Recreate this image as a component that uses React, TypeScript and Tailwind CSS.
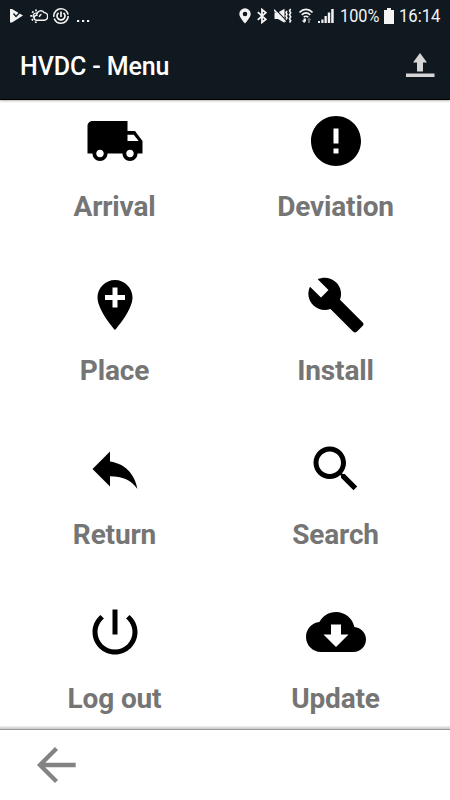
import type { ReactNode } from 'react'

type MenuItem = { label: string; path: string }

const items: MenuItem[] = [
  {
    label: 'Arrival',
    path: 'M20 8h-3V4H3c-1.1 0-2 .9-2 2v11h2c0 1.66 1.34 3 3 3s3-1.34 3-3h6c0 1.66 1.34 3 3 3s3-1.34 3-3h2v-5l-3-4zM6 18.5c-.83 0-1.5-.67-1.5-1.5s.67-1.5 1.5-1.5 1.5.67 1.5 1.5-.67 1.5-1.5 1.5zm13.5-9l1.96 2.5H17V9.5h2.5zm-1.5 9c-.83 0-1.5-.67-1.5-1.5s.67-1.5 1.5-1.5 1.5.67 1.5 1.5-.67 1.5-1.5 1.5z',
  },
  {
    label: 'Deviation',
    path: 'M12 2C6.48 2 2 6.48 2 12s4.48 10 10 10 10-4.48 10-10S17.52 2 12 2zm1 15h-2v-2h2v2zm0-4h-2V7h2v6z',
  },
  {
    label: 'Place',
    path: 'M12 2C8.14 2 5 5.14 5 9c0 5.25 7 13 7 13s7-7.75 7-13c0-3.86-3.14-7-7-7zm4 8h-3v3h-2v-3H8V8h3V5h2v3h3v2z',
  },
  {
    label: 'Install',
    path: 'M22.7 19l-9.1-9.1c.9-2.3.4-5-1.5-6.9-2-2-5-2.4-7.4-1.3L9 6 6 9 1.6 4.7C.4 7.1.9 10.1 2.9 12.1c1.9 1.9 4.6 2.4 6.9 1.5l9.1 9.1c.4.4 1 .4 1.4 0l2.3-2.3c.5-.4.5-1.1.1-1.4z',
  },
  {
    label: 'Return',
    path: 'M10 9V5l-7 7 7 7v-4.1c5 0 8.5 1.6 11 5.1-1-5-4-10-11-11z',
  },
  {
    label: 'Search',
    path: 'M15.5 14h-.79l-.28-.27C15.41 12.59 16 11.11 16 9.5 16 5.91 13.09 3 9.5 3S3 5.91 3 9.5 5.91 16 9.5 16c1.61 0 3.09-.59 4.23-1.57l.27.28v.79l5 4.99L20.49 19l-4.99-5zm-6 0C7.01 14 5 11.99 5 9.5S7.01 5 9.5 5 14 7.01 14 9.5 11.99 14 9.5 14z',
  },
  {
    label: 'Log out',
    path: 'M13 3h-2v10h2V3zm4.83 2.17l-1.42 1.42C17.99 7.86 19 9.81 19 12c0 3.87-3.13 7-7 7s-7-3.13-7-7c0-2.19 1.01-4.14 2.58-5.42L6.17 5.17C4.23 6.82 3 9.26 3 12c0 4.97 4.03 9 9 9s9-4.03 9-9c0-2.74-1.23-5.18-3.17-6.83z',
  },
  {
    label: 'Update',
    path: 'M19.35 10.04C18.67 6.59 15.64 4 12 4 9.11 4 6.6 5.64 5.35 8.04 2.34 8.36 0 10.91 0 14c0 3.31 2.69 6 6 6h13c2.76 0 5-2.24 5-5 0-2.64-2.05-4.78-4.65-4.96zM17 13l-5 5-5-5h3V9h4v4h3z',
  },
]

function Glyph({ w, h, className = '', children }: { w: number; h: number; className?: string; children: ReactNode }) {
  return (
    <svg width={w} height={h} viewBox={`0 0 ${w} ${h}`} className={`shrink-0 ${className}`} fill="none">
      {children}
    </svg>
  )
}

function StatusBar() {
  return (
    <div className="flex h-[31px] items-center justify-between pl-[9px] pr-[10px] text-[#f4f4f4]">
      <div className="flex items-center">
        {/* Play check */}
        <Glyph w={14} h={16}>
          <path d="M1 1h2l11 6.5-11 7H1z" fill="currentColor" />
          <path d="M4.5 5.5L7 8.5l5.5-6" stroke="#101820" strokeWidth="1.3" />
        </Glyph>
        {/* Weather */}
        <Glyph w={18} h={16} className="ml-[7px]">
          <path d="M6.5 12.3a2.5 2.5 0 0 1 .3-5 4 4 0 0 1 7.2-2.8 3.9 3.9 0 0 1-.4 7.8zM9.3 9c.2-1.5 1-2.5 2.2-2.8" stroke="currentColor" strokeWidth="1.5" />
          <path d="M3.6 9.5a2.8 2.8 0 0 1 3-4.3" stroke="currentColor" strokeWidth="1.4" />
          <path d="M6 1.5v1.8M2.2 3.5l1.3 1.2M.2 7.8h1.8M1.8 12.3l1.3-1.2M5.8 15v-1.5" stroke="currentColor" strokeWidth="1.8" />
        </Glyph>
        {/* Power ring */}
        <Glyph w={16} h={16} className="ml-[5px]">
          <circle cx="8" cy="8" r="7.2" stroke="currentColor" strokeWidth="1.6" strokeDasharray="20 1.5 22 1.7" />
          <path d="M5.5 4.8a4 4 0 1 0 5 0M8 3.5V9" stroke="currentColor" strokeWidth="1.7" />
        </Glyph>
        <Glyph w={14} h={16} className="ml-[7px]">
          <path d="M1 13h2.2M6 13h2.2M11 13h2.2" stroke="currentColor" strokeWidth="2" />
        </Glyph>
      </div>

      <div className="flex items-center">
        {/* Location */}
        <Glyph w={12} h={16}>
          <path fillRule="evenodd" d="M6 .3A5.7 5.7 0 0 0 .3 6c0 3.5 5.7 9.5 5.7 9.5s5.7-6 5.7-9.5A5.7 5.7 0 0 0 6 .3zm0 3.4a2.3 2.3 0 1 1 0 4.6 2.3 2.3 0 0 1 0-4.6z" fill="currentColor" />
        </Glyph>
        {/* Bluetooth */}
        <Glyph w={10} h={16} className="ml-[6px]">
          <path d="M.8 4.2l8 7.1L5 14.4V1.6l3.8 3.1-8 7.1" stroke="currentColor" strokeWidth="1.8" />
        </Glyph>
        {/* Sound off, vibrate */}
        <Glyph w={18} h={16} className="ml-[7px]">
          <path d="M.5 4.5H4L10.5.8v14L4 11H.5z" fill="currentColor" />
          <path d="M1 .8l11.5 12" stroke="#101820" strokeWidth="1.2" />
          <path d="M0 1.8l11.5 12" stroke="currentColor" strokeWidth="1.5" />
          <path d="M13 3l-1 1.5 1 1.7-1 1.8 1 1.8-1 1.7M16.7.8l-1.2 2 1.2 2-1.2 2 1.2 2-1.2 2 1.2 2-1.2 1.7" stroke="currentColor" strokeWidth="1.6" />
        </Glyph>
        {/* Wi-Fi */}
        <Glyph w={14} h={16} className="ml-[7px]">
          <path d="M.5 4.4c3.9-4 9.1-4 13 0M2.7 6.8c2.7-2.5 5.9-2.5 8.6 0M4.7 9.2c1.5-1.2 3.1-1.2 4.6 0" stroke="currentColor" strokeWidth="1.6" />
          <path d="M4.5 10.5v2H2.7L5.2 15 7 13v-2.5z" fill="currentColor" />
          <path d="M9 15v-3H7.8l2.4-2.5 2.3 2.5H11v3z" fill="#6c7278" />
        </Glyph>
        {/* Signal */}
        <Glyph w={16} h={16} className="ml-[5px]">
          <path d="M0 15v-2h2v2zM3.3 15v-3.5h2.2V15zM6.5 15V8h2.3v7zM9.8 15V4.5h2.4V15zM13.2 15V1h2.5v14z" fill="currentColor" />
        </Glyph>
        <span className="ml-[6px] w-[39px] text-[18.5px] leading-8 whitespace-nowrap"><span className="inline-block origin-left scale-x-[.88]">100%</span></span>
        {/* Battery */}
        <Glyph w={10} h={16} className="ml-[5px]">
          <path d="M3 0h4v2h3v14H0V2h3z" fill="currentColor" />
        </Glyph>
        <span className="ml-[5px] w-[41px] text-[18.5px] leading-8 whitespace-nowrap"><span className="inline-block origin-left scale-x-[.9]">16:14</span></span>
      </div>
    </div>
  )
}

export default function App() {
  return (
    <div className="flex h-[800px] w-[450px] flex-col overflow-hidden bg-white font-[Roboto,sans-serif]">
      <header className="h-[100px] shrink-0 border-b border-black bg-[#101820] shadow-[0_1px_2px_rgba(60,30,20,0.35)]">
        <StatusBar />
        <div className="flex h-[70px] items-center justify-between pl-5 pr-[15px]">
          <h1 className="pt-0.5 text-[25px] font-medium tracking-[-0.1px] text-white">HVDC - Menu</h1>
          <Glyph w={30} h={26}>
            <path d="M15 0l7 9.5h-4v9h-6v-9H8z" fill="#d6d6d6" />
            <path d="M1 20.5h28.5V24H1z" fill="#d6d6d6" />
          </Glyph>
        </div>
      </header>

      <main className="grid h-[626px] shrink-0 grid-cols-[221px_221px] auto-rows-[163.8px] justify-start overflow-hidden pl-1 pt-[11px]">
        {items.map((item) => (
          <button key={item.label} className="flex flex-col items-center">
            <svg width="60" height="60" viewBox="0 0 24 24" className="shrink-0 fill-black">
              <path d={item.path} />
            </svg>
            <span className="mt-[20.2px] text-[28px] leading-8 font-bold tracking-[-0.15px] text-[#757575]">{item.label}</span>
          </button>
        ))}
      </main>

      <footer className="flex grow flex-col">
        <div className="h-1 shrink-0 border-b border-[#999] bg-gradient-to-b from-[#f2f2f2] to-[#c8c8c8]" />
        <div className="flex grow items-center pl-9">
          <Glyph w={40} h={38}>
            <path d="M20.5 2.5L4 19l16.5 16.5M4 19h35.7" stroke="#838383" strokeWidth="4.3" />
          </Glyph>
        </div>
      </footer>
    </div>
  )
}
